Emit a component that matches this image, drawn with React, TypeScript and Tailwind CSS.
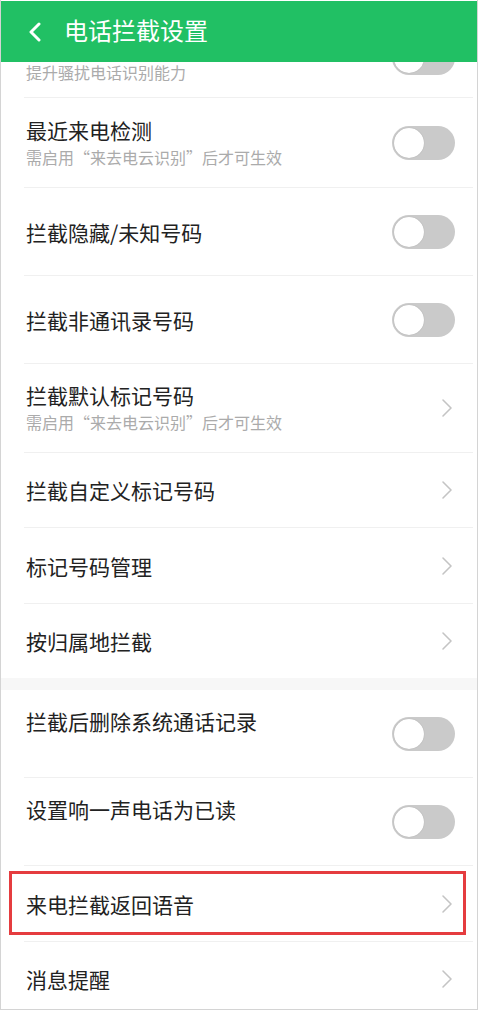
import React from 'react';

type Row = {
  title: string;
  sub?: string;
  kind: 'toggle' | 'chevron';
  h: number;
  twoLine?: boolean;
  highlight?: boolean;
};

const SUB = '需启用“来去电云识别”后才可生效';

const group1: Row[] = [
  { title: '最近来电检测', sub: SUB, kind: 'toggle', h: 89 },
  { title: '拦截隐藏/未知号码', kind: 'toggle', h: 87 },
  { title: '拦截非通讯录号码', kind: 'toggle', h: 87 },
  { title: '拦截默认标记号码', sub: SUB, kind: 'chevron', h: 88 },
  { title: '拦截自定义标记号码', kind: 'chevron', h: 74 },
  { title: '标记号码管理', kind: 'chevron', h: 75 },
  { title: '按归属地拦截', kind: 'chevron', h: 74 },
];

const group2: Row[] = [
  { title: '拦截后删除系统通话记录', kind: 'toggle', h: 87, twoLine: true },
  { title: '设置响一声电话为已读', kind: 'toggle', h: 87, twoLine: true },
  { title: '来电拦截返回语音', kind: 'chevron', h: 75, highlight: true },
  { title: '消息提醒', kind: 'chevron', h: 74 },
];

function Toggle() {
  return (
    <div className="w-[63px] h-[34px] rounded-full bg-[#cacaca] p-[2px] flex items-center shrink-0">
      <div className="w-[30px] h-[30px] rounded-full bg-white shadow-[0_0_1px_rgba(0,0,0,0.25)]" />
    </div>
  );
}

function Chevron() {
  return (
    <svg width="12" height="20" viewBox="0 0 12 20" className="shrink-0 mr-[2px]">
      <polyline points="2,2 10,10 2,18" fill="none" stroke="#c4c4c4" strokeWidth="1.6" strokeLinecap="round" strokeLinejoin="round" />
    </svg>
  );
}

function Divider() {
  return <div className="ml-[23px] mr-[4px] h-px bg-[#f0f0f0] shrink-0" />;
}

function ItemRow({ row }: { row: Row }) {
  return (
    <div className="relative flex items-center pl-[25px] pr-[22px] shrink-0" style={{ height: row.h }}>
      <div className="flex-1 flex flex-col">
        <div className="text-[21px] leading-[28px] text-[#222222]">{row.title}</div>
        {row.sub ? (
          <div className="text-[16px] leading-[26px] text-[#ababab]">{row.sub}</div>
        ) : row.twoLine ? (
          <div className="h-[26px]" />
        ) : null}
      </div>
      {row.kind === 'toggle' ? <Toggle /> : <Chevron />}
      {row.highlight && (
        <div className="absolute top-[5px] bottom-[6px] left-[8px] right-[11px] border-[3px] border-[#e53c3f] pointer-events-none" />
      )}
    </div>
  );
}

export default function App() {
  return (
    <div
      className="w-[478px] h-[1010px] bg-white border-x border-b border-[#d4d4d4] pt-px overflow-hidden flex flex-col"
      style={{ fontFamily: '"Noto Sans CJK SC", "Noto Sans", sans-serif' }}
    >
      <div className="h-[61px] bg-[#21c064] flex items-center relative z-10 shrink-0">
        <svg width="16" height="20" viewBox="0 0 16 20" className="ml-[26px]">
          <polyline points="12,2 4,10 12,18" fill="none" stroke="#ffffff" strokeWidth="3" strokeLinecap="round" strokeLinejoin="round" />
        </svg>
        <div className="ml-[21px] mb-[4px] text-[24px] leading-none text-white">电话拦截设置</div>
      </div>

      {/* partially scrolled first row */}
      <div className="h-[35px] overflow-hidden shrink-0">
        <div className="mt-[-47px] h-[85px] flex items-center pl-[25px] pr-[22px]">
          <div className="flex-1 flex flex-col">
            <div className="h-[28px]" />
            <div className="text-[16px] leading-[26px] text-[#ababab]">提升骚扰电话识别能力</div>
          </div>
          <Toggle />
        </div>
      </div>
      <Divider />

      {group1.map((r, i) => (
        <React.Fragment key={r.title}>
          <ItemRow row={r} />
          {i < group1.length - 1 && <Divider />}
        </React.Fragment>
      ))}

      <div className="h-[12px] bg-[#f7f7f7] shrink-0" />

      {group2.map((r, i) => (
        <React.Fragment key={r.title}>
          <ItemRow row={r} />
          {i < group2.length - 1 && <Divider />}
        </React.Fragment>
      ))}
    </div>
  );
}
